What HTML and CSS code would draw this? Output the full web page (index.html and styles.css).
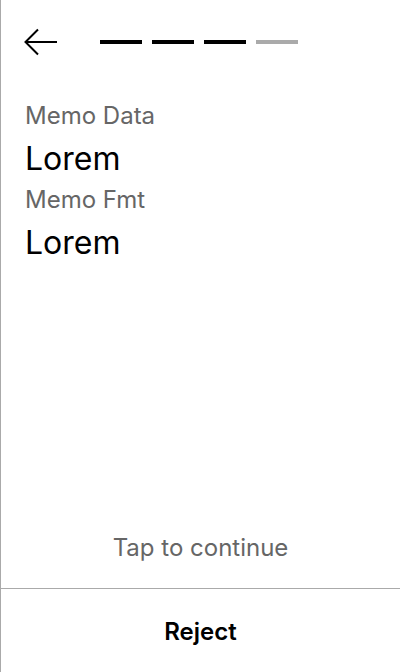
FILE: index.html
```html
<!DOCTYPE html>
<html>
<head>
<meta charset="utf-8">
<link rel="stylesheet" href="styles.css">
</head>
<body>
<div class="screen">
  <header class="header">
    <button class="back" aria-label="Back">
      <svg width="34" height="28" viewBox="0 0 34 28" fill="none" stroke="#000" stroke-width="2">
        <path d="M1.5 14 H33" />
        <path d="M14 1.5 L1.5 14 L14 26.5" />
      </svg>
    </button>
    <div class="steps">
      <span class="step done"></span>
      <span class="step done"></span>
      <span class="step done"></span>
      <span class="step"></span>
    </div>
  </header>
  <main class="content">
    <div class="label">Memo Data</div>
    <div class="value">Lorem</div>
    <div class="label">Memo Fmt</div>
    <div class="value">Lorem</div>
  </main>
  <div class="hint">Tap to continue</div>
  <footer class="footer">
    <button class="reject">Reject</button>
  </footer>
</div>
</body>
</html>
```
FILE: styles.css
```css
* { box-sizing: border-box; }
html, body { margin: 0; padding: 0; }
body {
  font-family: Inter, "Noto Sans", sans-serif;
  background: #fff;
  color: #000;
}
.screen {
  width: 400px;
  height: 672px;
  border-left: 1px solid #aaa;
  display: flex;
  flex-direction: column;
}
.header {
  display: flex;
  align-items: center;
  height: 56px;
  padding: 28px 0 0 23px;
}
.back {
  border: 0;
  background: none;
  padding: 0;
  width: 34px;
  height: 28px;
  display: flex;
}
.steps {
  display: flex;
  gap: 10px;
  margin-left: 42px;
}
.step {
  width: 42px;
  height: 4px;
  background: #aaa;
}
.step.done { background: #000; }
.content {
  flex: 1;
  padding: 44px 24px 0 24px;
}
.label {
  font-size: 24px;
  line-height: 32px;
  color: #666;
  margin-bottom: 7px;
}
.value {
  font-size: 32px;
  line-height: 40px;
  margin-bottom: 5px;
}
.hint {
  text-align: center;
  font-size: 24px;
  line-height: 32px;
  color: #666;
  padding-bottom: 24px;
}
.footer {
  border-top: 1px solid #aaa;
  height: 84px;
  padding-top: 2px;
  display: flex;
  align-items: center;
  justify-content: center;
}
.reject {
  border: 0;
  background: none;
  font-family: Inter, "Noto Sans", sans-serif;
  font-size: 24px;
  line-height: 32px;
  font-weight: 600;
  color: #000;
  padding: 0;
}
```
